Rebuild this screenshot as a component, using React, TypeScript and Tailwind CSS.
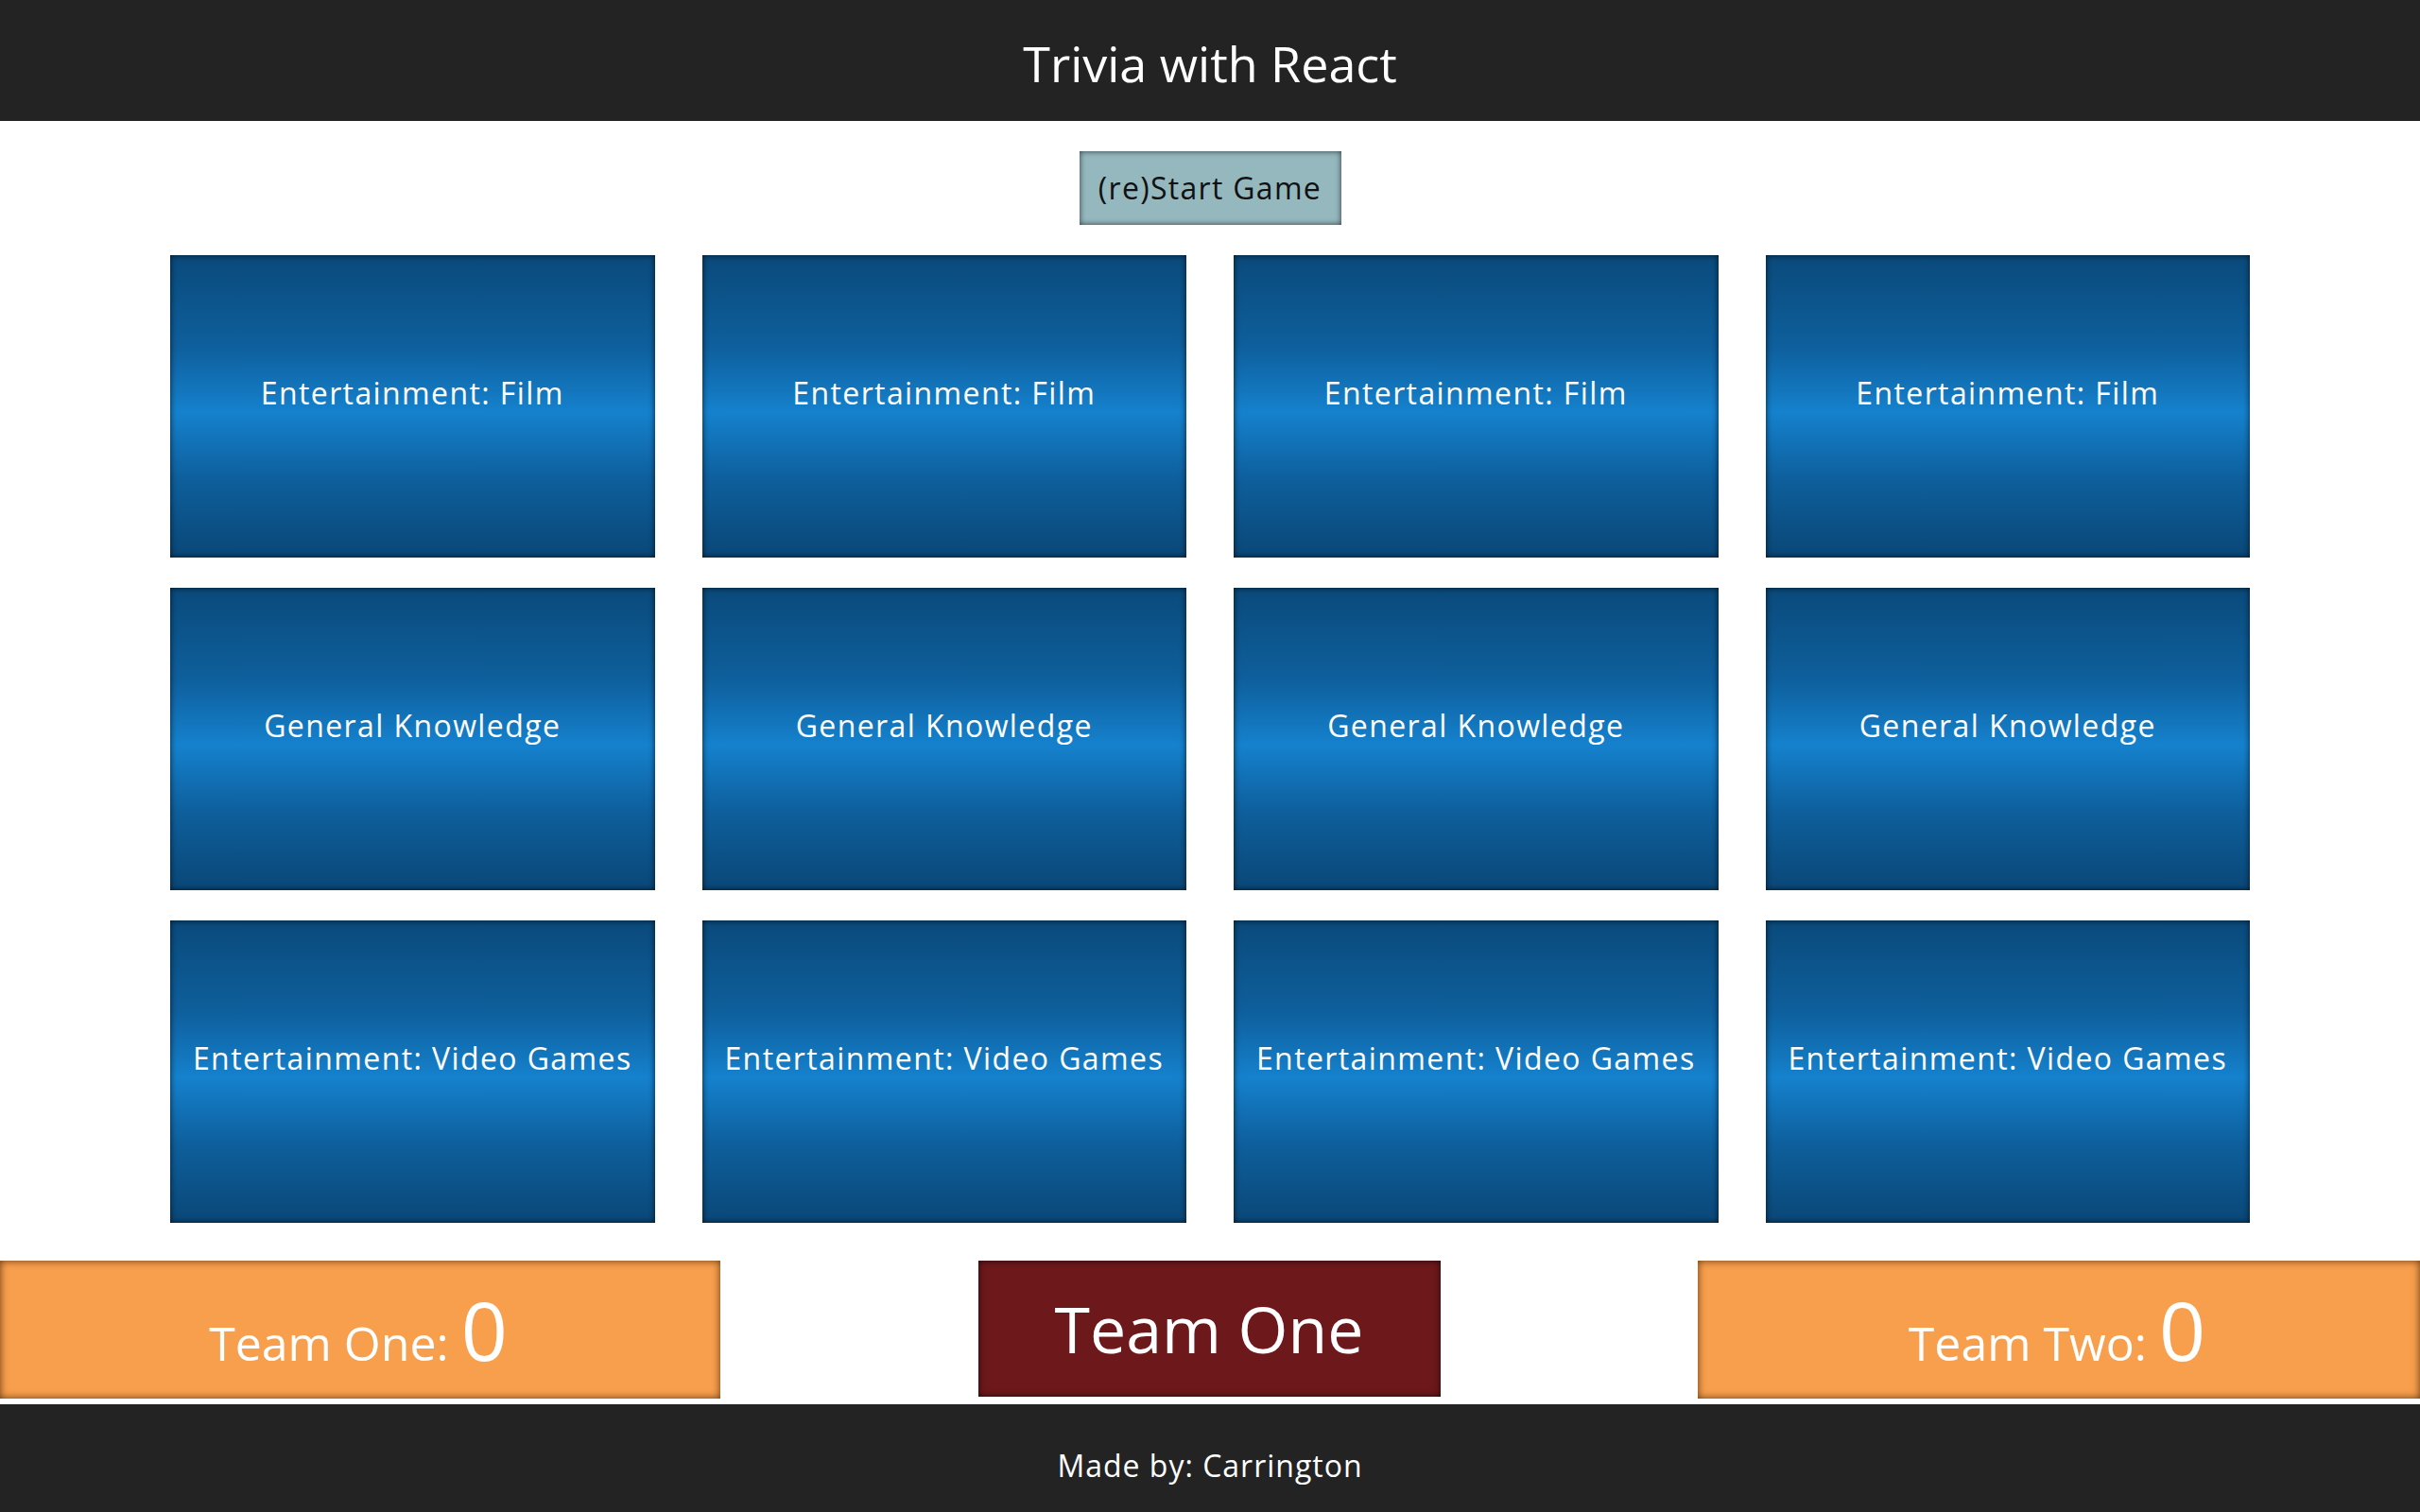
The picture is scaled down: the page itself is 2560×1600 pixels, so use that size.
const categories = ['Entertainment: Film', 'General Knowledge', 'Entertainment: Video Games'];

function Card({ label }: { label: string }) {
  return (
    <div className="h-[320px] flex items-center justify-center pb-[28px] bg-[linear-gradient(to_bottom,#0a4a7b_0%,#0e5f9c_30%,#1581cd_52%,#0e5f9c_74%,#0a4777_100%)] shadow-[inset_0_0_6px_rgba(0,0,0,0.75)]">
      <span className="text-white text-[32px] tracking-[1.4px] leading-none">{label}</span>
    </div>
  );
}

function Score({ team, score, className }: { team: string; score: number; className: string }) {
  return (
    <div className={`h-[146px] bg-[#f89f4e] shadow-[inset_0_0_9px_rgba(60,30,0,0.8)] flex items-center justify-center ${className}`}>
      <span className="text-white leading-none">
        <span className="text-[50px]">{team}: </span>
        <span className="text-[86px] tracking-[4px]">{score}</span>
      </span>
    </div>
  );
}

export default function App() {
  return (
    <div className="min-h-[1600px] bg-white font-['Open_Sans',sans-serif] flex flex-col">
      <header className="h-[128px] bg-[#232323] flex items-center justify-center pt-[6px]">
        <h1 className="text-white text-[52px] leading-none">Trivia with React</h1>
      </header>

      <div className="flex justify-center mt-[32px]">
        <button className="w-[277px] h-[78px] bg-[#95b8bf] shadow-[inset_0_0_6px_rgba(0,0,0,0.7)] text-[#111] text-[32px] tracking-[1.3px] leading-none">
          (re)Start Game
        </button>
      </div>

      <div className="grid grid-cols-4 gap-x-[50px] gap-y-[32px] px-[180px] mt-[32px]">
        {categories.flatMap((c, row) =>
          [0, 1, 2, 3].map((i) => <Card key={`${row}-${i}`} label={c} />)
        )}
      </div>

      <div className="flex justify-between items-start mt-[40px]">
        <Score team="Team One" score={0} className="w-[762px]" />
        <div className="w-[489px] h-[144px] bg-[#6d181b] shadow-[inset_0_0_7px_rgba(0,0,0,0.7)] flex items-center justify-center">
          <span className="text-white text-[68px] leading-none">Team One</span>
        </div>
        <Score team="Team Two" score={0} className="w-[764px]" />
      </div>

      <footer className="h-[114px] mt-[6px] bg-[#232323] flex items-center justify-center pt-[16px]">
        <p className="text-white text-[32px] tracking-[1px] leading-none">Made by: Carrington</p>
      </footer>
    </div>
  );
}
